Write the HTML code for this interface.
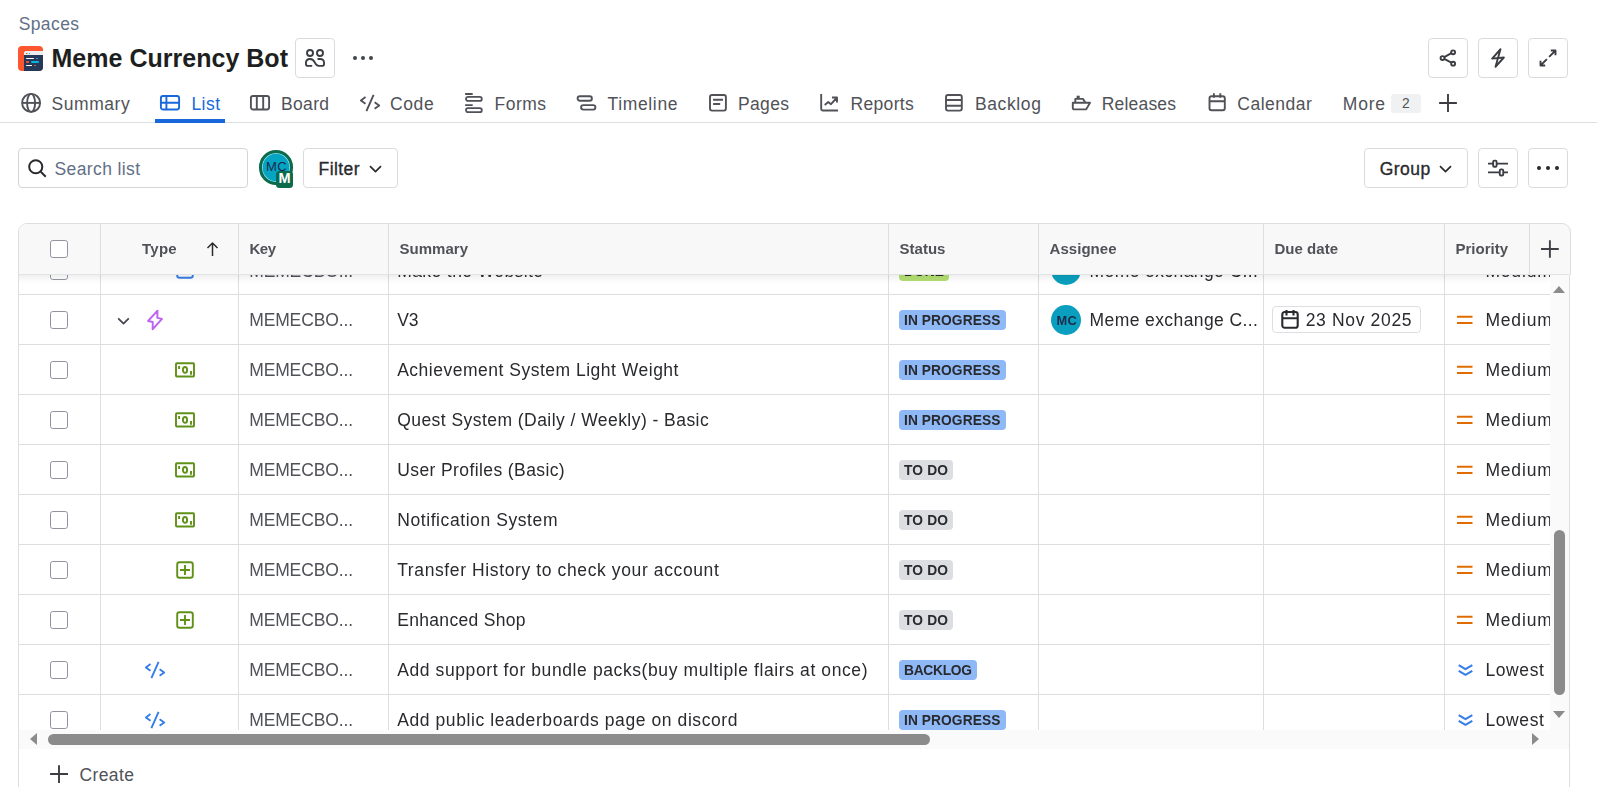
<!DOCTYPE html>
<html lang="en">
<head>
<meta charset="utf-8">
<title>Meme Currency Bot - List</title>
<style>
*{box-sizing:border-box;margin:0;padding:0}
html,body{width:1597px;height:787px;overflow:hidden;background:#fff}
body{font-family:"Liberation Sans",sans-serif;color:#292A2E;position:relative}
.abs{position:absolute}
.t{position:absolute;white-space:nowrap}
svg{position:absolute;overflow:visible;fill:none}
.btn{position:absolute;border:1px solid #DADBDE;border-radius:4px;background:#fff}
.cb{position:absolute;left:50.2px;width:17.5px;height:17.5px;border:1.7px solid #9295A0;border-radius:2.8px;background:#fff}
.loz{position:absolute;left:899px;height:20px;border-radius:4px}
.ip{background:#8FB8F6}
.td{background:#DDDEE1}
</style>
</head>
<body>
<div class="t" style="left:18.70px;top:13.80px;font-size:17.50px;color:#626F86;line-height:20px;letter-spacing:0.388px;">Spaces</div>
<div class="abs" style="left:18px;top:46px;width:25px;height:25px;border-radius:4px;background:#FF5630;overflow:hidden"><div class="abs" style="left:6px;top:5.4px;width:19px;height:20px;background:#253858;border-radius:1.5px 0 0 0"></div><div class="abs" style="left:6px;top:5.4px;width:19px;height:3.2px;background:#EBECF0;border-radius:1.5px 0 0 0"></div><div class="abs" style="left:7.5px;top:6.5px;width:1.2px;height:1.2px;background:#FF5630"></div><div class="abs" style="left:9px;top:6.5px;width:1.2px;height:1.2px;background:#FFAB00"></div><div class="abs" style="left:10.5px;top:6.5px;width:1.2px;height:1.2px;background:#00B8D9"></div><div class="abs" style="left:8px;top:11.5px;width:8px;height:1.5px;background:#fff;border-radius:1px"></div><div class="abs" style="left:17.5px;top:11.5px;width:2px;height:1.5px;background:#4C9AFF;border-radius:1px"></div><div class="abs" style="left:8px;top:15px;width:3px;height:1.5px;background:#FF5630;border-radius:1px"></div><div class="abs" style="left:13px;top:15px;width:8px;height:1.5px;background:#00B8D9;border-radius:1px"></div><div class="abs" style="left:8px;top:18.5px;width:6px;height:1.5px;background:#fff;border-radius:1px"></div><div class="abs" style="left:15.5px;top:18.5px;width:2px;height:1.5px;background:#FF5630;border-radius:1px"></div></div>
<div class="t" style="left:51.50px;top:43.50px;font-size:25.00px;font-weight:bold;color:#1E1F21;line-height:29px;letter-spacing:0.020px;">Meme Currency Bot</div>
<div class="btn" style="left:295px;top:38px;width:40px;height:40px;border-radius:4px"></div>
<svg style="left:305.00px;top:48.00px" width="20.00" height="20.00" viewBox="0 0 16 16" stroke="#3B3D42" stroke-width="1.500" stroke-linecap="butt" stroke-linejoin="round" ><circle cx="4" cy="4" r="2.4"/><circle cx="12" cy="4" r="2.4"/><path d="M5.75 14.25H2.25a1.5 1.5 0 0 1-1.5-1.5v-1a3 3 0 0 1 3-3h.4c2 0 2.9 1.2 3.65 2.75s1.6 2.75 3.2 2.75h2.75a1.5 1.5 0 0 0 1.5-1.5v-1a3 3 0 0 0-3-3H10"/></svg>
<div class="abs" style="left:352.9px;top:56.2px;width:3.8px;height:3.8px;border-radius:50%;background:#44464D"></div>
<div class="abs" style="left:361.1px;top:56.2px;width:3.8px;height:3.8px;border-radius:50%;background:#44464D"></div>
<div class="abs" style="left:369.2px;top:56.2px;width:3.8px;height:3.8px;border-radius:50%;background:#44464D"></div>
<div class="btn" style="left:1428.0px;top:38px;width:40px;height:40px;border-radius:4px"></div>
<div class="btn" style="left:1478.0px;top:38px;width:40px;height:40px;border-radius:4px"></div>
<div class="btn" style="left:1528.0px;top:38px;width:40px;height:40px;border-radius:4px"></div>
<svg style="left:1438.00px;top:48.00px" width="20.00" height="20.00" viewBox="0 0 16 16" stroke="#3B3D42" stroke-width="1.500" stroke-linecap="butt" stroke-linejoin="round" ><circle cx="12.1" cy="3.4" r="1.55"/><circle cx="3.6" cy="8" r="1.55"/><circle cx="12.1" cy="12.5" r="1.55"/><path d="M5 7.25l5.7-3.1M5 8.75l5.7 3"/></svg>
<svg style="left:1488.00px;top:48.00px" width="20.00" height="20.00" viewBox="0 0 16 16" stroke="#3B3D42" stroke-width="1.500" stroke-linecap="butt" stroke-linejoin="round" ><path d="M10 1L3.3 8.45l9.4-.85L6 15z"/></svg>
<svg style="left:1538.00px;top:48.00px" width="20.00" height="20.00" viewBox="0 0 16 16" stroke="#3B3D42" stroke-width="1.500" stroke-linecap="butt" stroke-linejoin="round" style="stroke-linejoin:miter"><path d="M10.25 2H14v3.75M14 2L8.9 7.1M2 10.25V14h3.75M2 14l5.1-5.1"/></svg>
<div class="abs" style="left:0;top:122px;width:1597px;height:1px;background:#DDDEE1"></div>
<div class="abs" style="left:155px;top:119px;width:70px;height:4px;background:#1868DB"></div>
<svg style="left:21.00px;top:93.00px" width="20.00" height="20.00" viewBox="0 0 20 20" stroke="#505258" stroke-width="1.900" stroke-linecap="butt" stroke-linejoin="round" ><circle cx="10.1" cy="9.9" r="9"/><ellipse cx="10.1" cy="9.9" rx="4" ry="9"/><path d="M1.1 9.9h18"/></svg>
<svg style="left:160.00px;top:93.00px" width="20.00" height="20.00" viewBox="0 0 20 20" stroke="#1868DB" stroke-width="1.900" stroke-linecap="butt" stroke-linejoin="round" ><rect x="0.9" y="3" width="18.2" height="13.5" rx="2.2"/><path d="M0.9 9.8h18.2M6.4 3v13.5"/></svg>
<svg style="left:250.00px;top:93.00px" width="20.00" height="20.00" viewBox="0 0 20 20" stroke="#505258" stroke-width="1.900" stroke-linecap="butt" stroke-linejoin="round" ><rect x="0.9" y="3" width="18.2" height="13.5" rx="2.2"/><path d="M6.8 3v13.5M13.2 3v13.5"/></svg>
<svg style="left:360.00px;top:93.00px" width="20.00" height="20.00" viewBox="0 0 20 20" stroke="#505258" stroke-width="1.900" stroke-linecap="butt" stroke-linejoin="round" ><path d="M5.5 4.1L0.9 7.4l4.6 3.3M13.6 1.8L6.4 18.2M14.6 9.2l4.6 3.3-4.6 3.3"/></svg>
<svg style="left:464.00px;top:93.00px" width="20.00" height="20.00" viewBox="0 0 20 20" stroke="#505258" stroke-width="1.800" stroke-linecap="butt" stroke-linejoin="round" ><path d="M1.1 1h7.6M1.1 12.2h7.6"/><rect x="2" y="3.9" width="15.8" height="4" rx="2"/><rect x="2" y="15.2" width="15.8" height="3.9" rx="1.95"/></svg>
<svg style="left:575.50px;top:93.00px" width="20.00" height="20.00" viewBox="0 0 20 20" stroke="#505258" stroke-width="1.900" stroke-linecap="butt" stroke-linejoin="round" ><rect x="1.6" y="3.2" width="14.3" height="4.5" rx="2.25"/><rect x="5.1" y="12.1" width="14.3" height="4.5" rx="2.25"/></svg>
<svg style="left:708.00px;top:93.00px" width="20.00" height="20.00" viewBox="0 0 20 20" stroke="#505258" stroke-width="1.900" stroke-linecap="butt" stroke-linejoin="round" ><rect x="2" y="2" width="15.9" height="15.6" rx="2"/><path d="M5.1 6.7H15M5.1 11h7.1"/></svg>
<svg style="left:819.00px;top:93.00px" width="20.00" height="20.00" viewBox="0 0 20 20" stroke="#505258" stroke-width="1.900" stroke-linecap="butt" stroke-linejoin="round" ><path d="M2.2 1.1V16a1.5 1.5 0 0 0 1.5 1.5H19M5.7 11.9L9.2 9.1l2.8 2.1 5.6-6.2M13 4.5h5v5.1"/></svg>
<svg style="left:944.00px;top:93.00px" width="20.00" height="20.00" viewBox="0 0 20 20" stroke="#505258" stroke-width="1.900" stroke-linecap="butt" stroke-linejoin="round" ><rect x="2" y="2" width="15.8" height="15.6" rx="2"/><path d="M2 7h15.8M2 12.8h15.8"/></svg>
<svg style="left:1071.00px;top:93.00px" width="20.00" height="20.00" viewBox="0 0 20 20" stroke="#505258" stroke-width="1.900" stroke-linecap="butt" stroke-linejoin="round" ><path d="M1.8 9.8H19L15.2 16.4H3.3a1.5 1.5 0 0 1-1.5-1.5zM4.3 9.8V5.9h7.6l2.6 3.9"/><rect x="5.6" y="2.7" width="3.1" height="2.7" fill="#505258" stroke="none"/></svg>
<svg style="left:1207.00px;top:93.00px" width="20.00" height="20.00" viewBox="0 0 20 20" stroke="#505258" stroke-width="1.900" stroke-linecap="butt" stroke-linejoin="round" ><rect x="2.5" y="3.2" width="15.3" height="14" rx="2"/><path d="M2.5 8.3h15.3M6.9 0.3v4.5M13.3 0.3v4.5"/></svg>
<div class="t" style="left:51.50px;top:93.50px;font-size:17.50px;color:#505258;line-height:20px;letter-spacing:0.557px;">Summary</div>
<div class="t" style="left:191.40px;top:93.50px;font-size:17.50px;color:#1868DB;line-height:20px;letter-spacing:0.462px;">List</div>
<div class="t" style="left:281.00px;top:93.50px;font-size:17.50px;color:#505258;line-height:20px;letter-spacing:0.330px;">Board</div>
<div class="t" style="left:390.00px;top:93.50px;font-size:17.50px;color:#505258;line-height:20px;letter-spacing:0.625px;">Code</div>
<div class="t" style="left:494.60px;top:93.50px;font-size:17.50px;color:#505258;line-height:20px;letter-spacing:0.458px;">Forms</div>
<div class="t" style="left:607.60px;top:93.50px;font-size:17.50px;color:#505258;line-height:20px;letter-spacing:0.629px;">Timeline</div>
<div class="t" style="left:738.00px;top:93.50px;font-size:17.50px;color:#505258;line-height:20px;letter-spacing:0.347px;">Pages</div>
<div class="t" style="left:850.40px;top:93.50px;font-size:17.50px;color:#505258;line-height:20px;letter-spacing:0.351px;">Reports</div>
<div class="t" style="left:975.00px;top:93.50px;font-size:17.50px;color:#505258;line-height:20px;letter-spacing:0.607px;">Backlog</div>
<div class="t" style="left:1101.80px;top:93.50px;font-size:17.50px;color:#505258;line-height:20px;letter-spacing:0.175px;">Releases</div>
<div class="t" style="left:1237.30px;top:93.50px;font-size:17.50px;color:#505258;line-height:20px;letter-spacing:0.485px;">Calendar</div>
<div class="t" style="left:1342.80px;top:93.50px;font-size:17.50px;color:#505258;line-height:20px;letter-spacing:0.781px;">More</div>
<div class="abs" style="left:1391px;top:93.5px;width:29.5px;height:19px;border-radius:3px;background:#F0F1F2"></div>
<div class="t" style="left:1402.00px;top:94.50px;font-size:13.75px;color:#505258;line-height:17px;letter-spacing:0.369px;">2</div>
<svg style="left:1438.00px;top:93.00px" width="20.00" height="20.00" viewBox="0 0 20 20" stroke="#3B3D42" stroke-width="1.900" stroke-linecap="butt" stroke-linejoin="round" ><path d="M10 1.1v17.8M1.1 10h17.8"/></svg>
<div class="btn" style="left:18px;top:148px;width:230px;height:40px;border-color:#D4D5D9"></div>
<svg style="left:27.00px;top:158.00px" width="20.00" height="20.00" viewBox="0 0 16 16" stroke="#292A2E" stroke-width="1.600" stroke-linecap="butt" stroke-linejoin="round" ><circle cx="7" cy="7" r="5.25"/><path d="M11 11l4 4"/></svg>
<div class="t" style="left:54.50px;top:159.00px;font-size:17.50px;color:#626F86;line-height:20px;letter-spacing:0.382px;">Search list</div>
<div class="abs" style="left:258.5px;top:150.4px;width:34.6px;height:34.6px;border-radius:50%;background:#05A4C2;border:3px solid #0B6B4A;box-shadow:inset 0 0 0 0.8px #9ADBE6"></div>
<div class="t" style="left:266px;top:159px;font-size:13px;color:#172B4D;line-height:16px;letter-spacing:0.3px">MC</div>
<div class="abs" style="left:276.3px;top:170.8px;width:16.8px;height:16.8px;border-radius:3.5px;background:#0B6B4A"></div>
<div class="t" style="left:278.6px;top:169.6px;font-size:14.5px;font-weight:bold;color:#fff;line-height:17px">M</div>
<div class="btn" style="left:303px;top:148px;width:95px;height:40px"></div>
<div class="t" style="left:318.60px;top:158.50px;font-size:17.50px;color:#292A2E;line-height:20px;letter-spacing:0.421px;-webkit-text-stroke:0.35px #292A2E;">Filter</div>
<svg style="left:368.40px;top:160.20px" width="15.00" height="15.00" viewBox="0 0 12 12" stroke="#292A2E" stroke-width="1.300" stroke-linecap="butt" stroke-linejoin="round" style="stroke-linejoin:miter"><path d="M1.6 4.9l4.4 4.4 4.4-4.4"/></svg>
<div class="btn" style="left:1364px;top:148px;width:104px;height:40px;border-radius:4px"></div>
<div class="t" style="left:1379.70px;top:159.00px;font-size:17.50px;color:#292A2E;line-height:20px;letter-spacing:0.463px;-webkit-text-stroke:0.35px #292A2E;">Group</div>
<svg style="left:1438.00px;top:160.00px" width="15.00" height="15.00" viewBox="0 0 12 12" stroke="#292A2E" stroke-width="1.300" stroke-linecap="butt" stroke-linejoin="round" style="stroke-linejoin:miter"><path d="M1.6 4.9l4.4 4.4 4.4-4.4"/></svg>
<div class="btn" style="left:1478px;top:148px;width:40px;height:40px;border-radius:4px"></div>
<svg style="left:1488.00px;top:158.00px" width="20.00" height="20.00" viewBox="0 0 16 16" stroke="#3B3D42" stroke-width="1.500" stroke-linecap="butt" stroke-linejoin="round" ><path d="M0 4.5h4.25M6.75 4.5H16M0 11.5h9.5M12 11.5H16"/><rect x="4.1" y="2.1" width="2.8" height="4.9" rx="1"/><rect x="9.4" y="9.1" width="2.8" height="4.9" rx="1"/></svg>
<div class="btn" style="left:1528px;top:148px;width:40px;height:40px;border-radius:4px"></div>
<div class="abs" style="left:1537.4px;top:166px;width:3.8px;height:3.8px;border-radius:50%;background:#292A2E"></div>
<div class="abs" style="left:1546.1px;top:166px;width:3.8px;height:3.8px;border-radius:50%;background:#292A2E"></div>
<div class="abs" style="left:1554.8px;top:166px;width:3.8px;height:3.8px;border-radius:50%;background:#292A2E"></div>
<div class="abs" style="left:18px;top:223px;width:1552px;height:600px;border:1px solid #DDDEE1;border-radius:9px 9px 0 0"></div>
<div class="abs" style="left:1540px;top:223px;width:31px;height:52px;border:1px solid #DDDEE1;border-left:none;border-bottom:none;border-radius:0 9px 0 0;background:#F8F8F8"></div>
<div class="abs" id="rows" style="left:19px;top:224px;width:1531px;height:506px;overflow:hidden">
<div class="abs" style="left:0;top:70px;width:1532px;height:1px;background:#DDDEE1"></div>
<div class="abs" style="left:0;top:120px;width:1532px;height:1px;background:#DDDEE1"></div>
<div class="abs" style="left:0;top:170px;width:1532px;height:1px;background:#DDDEE1"></div>
<div class="abs" style="left:0;top:220px;width:1532px;height:1px;background:#DDDEE1"></div>
<div class="abs" style="left:0;top:270px;width:1532px;height:1px;background:#DDDEE1"></div>
<div class="abs" style="left:0;top:320px;width:1532px;height:1px;background:#DDDEE1"></div>
<div class="abs" style="left:0;top:370px;width:1532px;height:1px;background:#DDDEE1"></div>
<div class="abs" style="left:0;top:420px;width:1532px;height:1px;background:#DDDEE1"></div>
<div class="abs" style="left:0;top:470px;width:1532px;height:1px;background:#DDDEE1"></div>
<div class="abs" style="left:81px;top:0;width:1px;height:507px;background:#DDDEE1"></div>
<div class="abs" style="left:219px;top:0;width:1px;height:507px;background:#DDDEE1"></div>
<div class="abs" style="left:369px;top:0;width:1px;height:507px;background:#DDDEE1"></div>
<div class="abs" style="left:869px;top:0;width:1px;height:507px;background:#DDDEE1"></div>
<div class="abs" style="left:1019px;top:0;width:1px;height:507px;background:#DDDEE1"></div>
<div class="abs" style="left:1244px;top:0;width:1px;height:507px;background:#DDDEE1"></div>
<div class="abs" style="left:1425px;top:0;width:1px;height:507px;background:#DDDEE1"></div>
</div>
<div class="abs" id="rowclip" style="left:0;top:274px;width:1550px;height:456px;overflow:hidden;will-change:transform"><div class="abs" style="left:0;top:-274px;width:1597px;height:800px">
<div class="cb" style="top:262.2px"></div>
<svg style="left:175.00px;top:260.20px" width="20.00" height="20.00" viewBox="0 0 20 20" stroke="#357DE8" stroke-width="1.900" stroke-linecap="butt" stroke-linejoin="round" ><rect x="2.2" y="2.2" width="15.6" height="15.6" rx="2.3"/><path d="M6 10.3l2.5 3 5.5-6.6"/></svg>
<div class="t" style="left:249.20px;top:261.00px;font-size:17.50px;color:#505258;line-height:20px;letter-spacing:-0.133px;">MEMECBO...</div>
<div class="t" style="left:397.20px;top:261.00px;font-size:17.50px;color:#292A2E;line-height:20px;letter-spacing:0.404px;">Make the Website</div>
<div class="loz" style="top:261.0px;width:50px;background:#B3DF72"></div>
<div class="t" style="left:904.00px;top:262.50px;font-size:13.75px;font-weight:bold;color:#292A2E;line-height:17px;letter-spacing:0.087px;">DONE</div>
<div class="abs" style="left:1051px;top:255.0px;width:30px;height:30px;border-radius:50%;background:#0A9FBE"></div>
<div class="t" style="left:1089.50px;top:261.00px;font-size:17.50px;color:#292A2E;line-height:20px;letter-spacing:0.413px;">Meme exchange C...</div>
<div class="t" style="left:1485.40px;top:261.00px;font-size:17.50px;color:#292A2E;line-height:20px;letter-spacing:0.829px;">Medium</div>
<div class="cb" style="top:311.2px"></div>
<div class="t" style="left:249.20px;top:310.00px;font-size:17.50px;color:#505258;line-height:20px;letter-spacing:-0.133px;">MEMECBO...</div>
<div class="t" style="left:397.20px;top:310.00px;font-size:17.50px;color:#292A2E;line-height:20px;letter-spacing:-0.094px;">V3</div>
<div class="loz ip" style="top:310.0px;width:107px"></div>
<div class="t" style="left:904.00px;top:311.50px;font-size:13.75px;font-weight:bold;color:#292A2E;line-height:17px;letter-spacing:0.081px;">IN PROGRESS</div>
<svg style="left:1457.30px;top:309.80px" width="15.50" height="20.00" viewBox="0 0 15.5 20" stroke="#E06C00" stroke-width="2.000" stroke-linecap="butt" stroke-linejoin="round" ><path d="M0 6.7h15.5M0 13h15.5"/></svg>
<div class="t" style="left:1485.40px;top:310.00px;font-size:17.50px;color:#292A2E;line-height:20px;letter-spacing:0.829px;">Medium</div>
<svg style="left:116.00px;top:315.70px" width="15.00" height="15.00" viewBox="0 0 15 15" stroke="#44464D" stroke-width="1.700" stroke-linecap="butt" stroke-linejoin="round" style="stroke-linejoin:miter"><path d="M2.2 2.3l5.3 5.3 5.3-5.3"/></svg>
<svg style="left:145.00px;top:309.00px" width="20.00" height="20.00" viewBox="145 309.0 20 20" stroke="#BF63F3" stroke-width="1.900" stroke-linecap="butt" stroke-linejoin="round" ><path d="M157.5 310.65L148.1 321l4.7 1-.2 7.25 9.4-10.35-4.7-1z"/></svg>
<div class="cb" style="top:361.2px"></div>
<div class="t" style="left:249.20px;top:360.00px;font-size:17.50px;color:#505258;line-height:20px;letter-spacing:-0.133px;">MEMECBO...</div>
<div class="t" style="left:397.20px;top:360.00px;font-size:17.50px;color:#292A2E;line-height:20px;letter-spacing:0.503px;">Achievement System Light Weight</div>
<div class="loz ip" style="top:360.0px;width:107px"></div>
<div class="t" style="left:904.00px;top:361.50px;font-size:13.75px;font-weight:bold;color:#292A2E;line-height:17px;letter-spacing:0.081px;">IN PROGRESS</div>
<svg style="left:1457.30px;top:359.80px" width="15.50" height="20.00" viewBox="0 0 15.5 20" stroke="#E06C00" stroke-width="2.000" stroke-linecap="butt" stroke-linejoin="round" ><path d="M0 6.7h15.5M0 13h15.5"/></svg>
<div class="t" style="left:1485.40px;top:360.00px;font-size:17.50px;color:#292A2E;line-height:20px;letter-spacing:0.829px;">Medium</div>
<svg style="left:175.00px;top:360.00px" width="20.00" height="20.00" viewBox="0 0 20 20" stroke="#5F9018" stroke-width="1.900" stroke-linecap="butt" stroke-linejoin="round" ><rect x="1" y="3.2" width="18" height="13.3" rx="0.8"/><ellipse cx="10" cy="9.9" rx="2.1" ry="2.9"/><path d="M4.1 6v3M16 11v3.7"/></svg>
<div class="cb" style="top:411.2px"></div>
<div class="t" style="left:249.20px;top:410.00px;font-size:17.50px;color:#505258;line-height:20px;letter-spacing:-0.133px;">MEMECBO...</div>
<div class="t" style="left:397.20px;top:410.00px;font-size:17.50px;color:#292A2E;line-height:20px;letter-spacing:0.450px;">Quest System (Daily / Weekly) - Basic</div>
<div class="loz ip" style="top:410.0px;width:107px"></div>
<div class="t" style="left:904.00px;top:411.50px;font-size:13.75px;font-weight:bold;color:#292A2E;line-height:17px;letter-spacing:0.081px;">IN PROGRESS</div>
<svg style="left:1457.30px;top:409.80px" width="15.50" height="20.00" viewBox="0 0 15.5 20" stroke="#E06C00" stroke-width="2.000" stroke-linecap="butt" stroke-linejoin="round" ><path d="M0 6.7h15.5M0 13h15.5"/></svg>
<div class="t" style="left:1485.40px;top:410.00px;font-size:17.50px;color:#292A2E;line-height:20px;letter-spacing:0.829px;">Medium</div>
<svg style="left:175.00px;top:410.00px" width="20.00" height="20.00" viewBox="0 0 20 20" stroke="#5F9018" stroke-width="1.900" stroke-linecap="butt" stroke-linejoin="round" ><rect x="1" y="3.2" width="18" height="13.3" rx="0.8"/><ellipse cx="10" cy="9.9" rx="2.1" ry="2.9"/><path d="M4.1 6v3M16 11v3.7"/></svg>
<div class="cb" style="top:461.2px"></div>
<div class="t" style="left:249.20px;top:460.00px;font-size:17.50px;color:#505258;line-height:20px;letter-spacing:-0.133px;">MEMECBO...</div>
<div class="t" style="left:397.20px;top:460.00px;font-size:17.50px;color:#292A2E;line-height:20px;letter-spacing:0.402px;">User Profiles (Basic)</div>
<div class="loz td" style="top:460.0px;width:54px"></div>
<div class="t" style="left:904.00px;top:461.50px;font-size:13.75px;font-weight:bold;color:#292A2E;line-height:17px;letter-spacing:0.180px;">TO DO</div>
<svg style="left:1457.30px;top:459.80px" width="15.50" height="20.00" viewBox="0 0 15.5 20" stroke="#E06C00" stroke-width="2.000" stroke-linecap="butt" stroke-linejoin="round" ><path d="M0 6.7h15.5M0 13h15.5"/></svg>
<div class="t" style="left:1485.40px;top:460.00px;font-size:17.50px;color:#292A2E;line-height:20px;letter-spacing:0.829px;">Medium</div>
<svg style="left:175.00px;top:460.00px" width="20.00" height="20.00" viewBox="0 0 20 20" stroke="#5F9018" stroke-width="1.900" stroke-linecap="butt" stroke-linejoin="round" ><rect x="1" y="3.2" width="18" height="13.3" rx="0.8"/><ellipse cx="10" cy="9.9" rx="2.1" ry="2.9"/><path d="M4.1 6v3M16 11v3.7"/></svg>
<div class="cb" style="top:511.2px"></div>
<div class="t" style="left:249.20px;top:510.00px;font-size:17.50px;color:#505258;line-height:20px;letter-spacing:-0.133px;">MEMECBO...</div>
<div class="t" style="left:397.20px;top:510.00px;font-size:17.50px;color:#292A2E;line-height:20px;letter-spacing:0.583px;">Notification System</div>
<div class="loz td" style="top:510.0px;width:54px"></div>
<div class="t" style="left:904.00px;top:511.50px;font-size:13.75px;font-weight:bold;color:#292A2E;line-height:17px;letter-spacing:0.180px;">TO DO</div>
<svg style="left:1457.30px;top:509.80px" width="15.50" height="20.00" viewBox="0 0 15.5 20" stroke="#E06C00" stroke-width="2.000" stroke-linecap="butt" stroke-linejoin="round" ><path d="M0 6.7h15.5M0 13h15.5"/></svg>
<div class="t" style="left:1485.40px;top:510.00px;font-size:17.50px;color:#292A2E;line-height:20px;letter-spacing:0.829px;">Medium</div>
<svg style="left:175.00px;top:510.00px" width="20.00" height="20.00" viewBox="0 0 20 20" stroke="#5F9018" stroke-width="1.900" stroke-linecap="butt" stroke-linejoin="round" ><rect x="1" y="3.2" width="18" height="13.3" rx="0.8"/><ellipse cx="10" cy="9.9" rx="2.1" ry="2.9"/><path d="M4.1 6v3M16 11v3.7"/></svg>
<div class="cb" style="top:561.2px"></div>
<div class="t" style="left:249.20px;top:560.00px;font-size:17.50px;color:#505258;line-height:20px;letter-spacing:-0.133px;">MEMECBO...</div>
<div class="t" style="left:397.20px;top:560.00px;font-size:17.50px;color:#292A2E;line-height:20px;letter-spacing:0.614px;">Transfer History to check your account</div>
<div class="loz td" style="top:560.0px;width:54px"></div>
<div class="t" style="left:904.00px;top:561.50px;font-size:13.75px;font-weight:bold;color:#292A2E;line-height:17px;letter-spacing:0.180px;">TO DO</div>
<svg style="left:1457.30px;top:559.80px" width="15.50" height="20.00" viewBox="0 0 15.5 20" stroke="#E06C00" stroke-width="2.000" stroke-linecap="butt" stroke-linejoin="round" ><path d="M0 6.7h15.5M0 13h15.5"/></svg>
<div class="t" style="left:1485.40px;top:560.00px;font-size:17.50px;color:#292A2E;line-height:20px;letter-spacing:0.829px;">Medium</div>
<svg style="left:175.00px;top:559.90px" width="20.00" height="20.00" viewBox="0 0 20 20" stroke="#5F9018" stroke-width="1.900" stroke-linecap="butt" stroke-linejoin="round" ><rect x="2.2" y="2.2" width="15.6" height="15.6" rx="2.3"/><path d="M10 5v10M5 10h10"/></svg>
<div class="cb" style="top:611.2px"></div>
<div class="t" style="left:249.20px;top:610.00px;font-size:17.50px;color:#505258;line-height:20px;letter-spacing:-0.133px;">MEMECBO...</div>
<div class="t" style="left:397.20px;top:610.00px;font-size:17.50px;color:#292A2E;line-height:20px;letter-spacing:0.320px;">Enhanced Shop</div>
<div class="loz td" style="top:610.0px;width:54px"></div>
<div class="t" style="left:904.00px;top:611.50px;font-size:13.75px;font-weight:bold;color:#292A2E;line-height:17px;letter-spacing:0.180px;">TO DO</div>
<svg style="left:1457.30px;top:609.80px" width="15.50" height="20.00" viewBox="0 0 15.5 20" stroke="#E06C00" stroke-width="2.000" stroke-linecap="butt" stroke-linejoin="round" ><path d="M0 6.7h15.5M0 13h15.5"/></svg>
<div class="t" style="left:1485.40px;top:610.00px;font-size:17.50px;color:#292A2E;line-height:20px;letter-spacing:0.829px;">Medium</div>
<svg style="left:175.00px;top:609.90px" width="20.00" height="20.00" viewBox="0 0 20 20" stroke="#5F9018" stroke-width="1.900" stroke-linecap="butt" stroke-linejoin="round" ><rect x="2.2" y="2.2" width="15.6" height="15.6" rx="2.3"/><path d="M10 5v10M5 10h10"/></svg>
<div class="cb" style="top:661.2px"></div>
<div class="t" style="left:249.20px;top:660.00px;font-size:17.50px;color:#505258;line-height:20px;letter-spacing:-0.133px;">MEMECBO...</div>
<div class="t" style="left:397.20px;top:660.00px;font-size:17.50px;color:#292A2E;line-height:20px;letter-spacing:0.599px;">Add support for bundle packs(buy multiple flairs at once)</div>
<div class="loz ip" style="top:660.0px;width:78px"></div>
<div class="t" style="left:904.00px;top:661.50px;font-size:13.75px;font-weight:bold;color:#292A2E;line-height:17px;letter-spacing:-0.251px;">BACKLOG</div>
<svg style="left:1457.50px;top:660.00px" width="15.00" height="20.00" viewBox="0 0 15 20" stroke="#357DE8" stroke-width="2.000" stroke-linecap="butt" stroke-linejoin="round" style="stroke-linejoin:miter"><path d="M0.7 5.2l6.8 4 6.8-4M0.7 10.8l6.8 4 6.8-4"/></svg>
<div class="t" style="left:1485.50px;top:660.00px;font-size:17.50px;color:#292A2E;line-height:20px;letter-spacing:0.574px;">Lowest</div>
<svg style="left:145.00px;top:660.00px" width="20.00" height="20.00" viewBox="0 0 20 20" stroke="#357DE8" stroke-width="1.900" stroke-linecap="butt" stroke-linejoin="round" ><path d="M5.5 4.1L0.9 7.4l4.6 3.3M13.6 1.8L6.4 18.2M14.6 9.2l4.6 3.3-4.6 3.3"/></svg>
<div class="cb" style="top:711.2px"></div>
<div class="t" style="left:249.20px;top:710.00px;font-size:17.50px;color:#505258;line-height:20px;letter-spacing:-0.133px;">MEMECBO...</div>
<div class="t" style="left:397.20px;top:710.00px;font-size:17.50px;color:#292A2E;line-height:20px;letter-spacing:0.583px;">Add public leaderboards page on discord</div>
<div class="loz ip" style="top:710.0px;width:107px"></div>
<div class="t" style="left:904.00px;top:711.50px;font-size:13.75px;font-weight:bold;color:#292A2E;line-height:17px;letter-spacing:0.081px;">IN PROGRESS</div>
<svg style="left:1457.50px;top:710.00px" width="15.00" height="20.00" viewBox="0 0 15 20" stroke="#357DE8" stroke-width="2.000" stroke-linecap="butt" stroke-linejoin="round" style="stroke-linejoin:miter"><path d="M0.7 5.2l6.8 4 6.8-4M0.7 10.8l6.8 4 6.8-4"/></svg>
<div class="t" style="left:1485.50px;top:710.00px;font-size:17.50px;color:#292A2E;line-height:20px;letter-spacing:0.574px;">Lowest</div>
<svg style="left:145.00px;top:710.00px" width="20.00" height="20.00" viewBox="0 0 20 20" stroke="#357DE8" stroke-width="1.900" stroke-linecap="butt" stroke-linejoin="round" ><path d="M5.5 4.1L0.9 7.4l4.6 3.3M13.6 1.8L6.4 18.2M14.6 9.2l4.6 3.3-4.6 3.3"/></svg>
<div class="abs" style="left:1051px;top:305px;width:30px;height:30px;border-radius:50%;background:#0A9FBE"></div>
<div class="t" style="left:1056.6px;top:312.6px;font-size:12.8px;font-weight:bold;color:#1C2B4A;line-height:15px;letter-spacing:0.3px">MC</div>
<div class="t" style="left:1089.50px;top:310.00px;font-size:17.50px;color:#292A2E;line-height:20px;letter-spacing:0.413px;">Meme exchange C...</div>
<div class="btn" style="left:1271.5px;top:306px;width:149px;height:26.5px;border-color:#DDDEE1"></div>
<svg style="left:1280.00px;top:309.00px" width="20.00" height="20.00" viewBox="0 0 20 20" stroke="#292A2E" stroke-width="2.100" stroke-linecap="butt" stroke-linejoin="round" ><rect x="2.3" y="3" width="15.4" height="15.8" rx="2.4"/><path d="M2.3 9.3h15.4M6.5 0.9v5.6M13.5 0.9v5.6"/></svg>
<div class="t" style="left:1305.70px;top:310.00px;font-size:17.50px;color:#292A2E;line-height:20px;letter-spacing:0.657px;">23 Nov 2025</div>
</div></div>
<div class="abs" style="left:19px;top:224px;width:1550px;height:70px;overflow:hidden;border-radius:8px 8px 0 0"><div class="abs" style="left:-20px;top:0;width:1552px;height:50px;background:#F8F8F8;box-shadow:0 1px 0 #E2E3E5, 0 3px 8px rgba(30,31,33,0.10)"></div><div class="abs" style="left:1510px;top:0;width:40px;height:50px;background:#F8F8F8;box-shadow:0 1px 0 #E2E3E5"></div></div>
<div class="abs" style="left:100px;top:224px;width:1px;height:50px;background:#DDDEE1"></div>
<div class="abs" style="left:238px;top:224px;width:1px;height:50px;background:#DDDEE1"></div>
<div class="abs" style="left:388px;top:224px;width:1px;height:50px;background:#DDDEE1"></div>
<div class="abs" style="left:888px;top:224px;width:1px;height:50px;background:#DDDEE1"></div>
<div class="abs" style="left:1038px;top:224px;width:1px;height:50px;background:#DDDEE1"></div>
<div class="abs" style="left:1263px;top:224px;width:1px;height:50px;background:#DDDEE1"></div>
<div class="abs" style="left:1444px;top:224px;width:1px;height:50px;background:#DDDEE1"></div>
<div class="abs" style="left:1529px;top:224px;width:1px;height:50px;background:#DDDEE1"></div>
<div class="cb" style="top:240.2px"></div>
<div class="t" style="left:142.00px;top:240.00px;font-size:15.00px;font-weight:bold;color:#505258;line-height:17px;letter-spacing:0.267px;">Type</div>
<div class="t" style="left:249.50px;top:240.00px;font-size:15.00px;font-weight:bold;color:#505258;line-height:17px;letter-spacing:-0.512px;">Key</div>
<div class="t" style="left:399.50px;top:240.00px;font-size:15.00px;font-weight:bold;color:#505258;line-height:17px;letter-spacing:0.023px;">Summary</div>
<div class="t" style="left:899.50px;top:240.00px;font-size:15.00px;font-weight:bold;color:#505258;line-height:17px;letter-spacing:0.015px;">Status</div>
<div class="t" style="left:1049.50px;top:240.00px;font-size:15.00px;font-weight:bold;color:#505258;line-height:17px;letter-spacing:0.055px;">Assignee</div>
<div class="t" style="left:1274.50px;top:240.00px;font-size:15.00px;font-weight:bold;color:#505258;line-height:17px;letter-spacing:0.023px;">Due date</div>
<div class="t" style="left:1455.50px;top:240.00px;font-size:15.00px;font-weight:bold;color:#505258;line-height:17px;letter-spacing:0.000px;">Priority</div>
<svg style="left:206.00px;top:241.00px" width="13.00" height="16.00" viewBox="0 0 13 16" stroke="#292A2E" stroke-width="1.500" stroke-linecap="butt" stroke-linejoin="round" style="stroke-linejoin:miter"><path d="M6.5 15V2M1.5 7l5-5 5 5"/></svg>
<svg style="left:1541.00px;top:240.00px" width="18.00" height="18.00" viewBox="0 0 18 18" stroke="#3F4147" stroke-width="1.900" stroke-linecap="butt" stroke-linejoin="round" ><path d="M8.9 0.3v17.4M0 9h17.8"/></svg>
<div class="abs" style="left:1550px;top:275px;width:19px;height:455px;background:#FAFAFA"></div>
<div class="abs" style="left:1552.6px;top:285.8px;width:0;height:0;border-left:6.7px solid transparent;border-right:6.7px solid transparent;border-bottom:7.2px solid #8B8B8B"></div>
<div class="abs" style="left:1552.6px;top:710.8px;width:0;height:0;border-left:6.7px solid transparent;border-right:6.7px solid transparent;border-top:7.2px solid #8B8B8B"></div>
<div class="abs" style="left:1554px;top:530px;width:11px;height:165px;border-radius:5.5px;background:#8B8B8B"></div>
<div class="abs" style="left:19px;top:730px;width:1550px;height:18.5px;background:#FAFAFA"></div>
<div class="abs" style="left:30px;top:733px;width:0;height:0;border-top:6.6px solid transparent;border-bottom:6.6px solid transparent;border-right:7.2px solid #8B8B8B"></div>
<div class="abs" style="left:1532px;top:733px;width:0;height:0;border-top:6.6px solid transparent;border-bottom:6.6px solid transparent;border-left:7.2px solid #8B8B8B"></div>
<div class="abs" style="left:48px;top:734px;width:882px;height:11px;border-radius:5.5px;background:#8B8B8B"></div>
<svg style="left:50.00px;top:765.00px" width="18.00" height="18.00" viewBox="0 0 18 18" stroke="#3B3D42" stroke-width="1.900" stroke-linecap="butt" stroke-linejoin="round" ><path d="M9 0.2v17.8M0.1 9h17.9"/></svg>
<div class="t" style="left:79.50px;top:765.00px;font-size:17.50px;color:#505258;line-height:20px;letter-spacing:0.391px;">Create</div>
</body>
</html>
